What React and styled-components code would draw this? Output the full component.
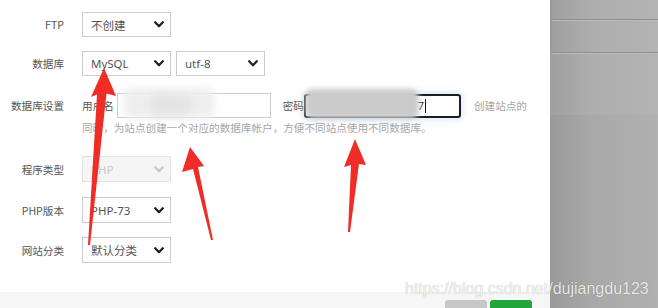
import React from "react";
import styled, { createGlobalStyle } from "styled-components";

const Global = createGlobalStyle`
  html, body { margin: 0; padding: 0; background: #fff; }
  body { font-family: "Noto Sans", "Noto Sans CJK SC", sans-serif; }
  * { box-sizing: border-box; }
`;

const Page = styled.div`
  position: relative;
  width: 658px;
  height: 308px;
  overflow: hidden;
  display: flex;
`;

const Dialog = styled.div`
  width: 550px;
  height: 308px;
  background: #fff;
  display: flex;
  flex-direction: column;
`;

const Form = styled.div`
  flex: 1;
  padding-top: 12px;
  display: flex;
  flex-direction: column;
`;

const Row = styled.div`
  display: flex;
  align-items: center;
  margin-top: ${(p) => p.$mt || 0}px;
  height: ${(p) => p.$h || 25}px;
`;

const Label = styled.div`
  width: 64px;
  margin-right: 18px;
  text-align: right;
  font-family: "Noto Sans CJK SC", sans-serif;
  font-size: 10.6px;
  color: #555;
  white-space: nowrap;
`;

const SelectBox = styled.div`
  width: 89px;
  height: 100%;
  margin-right: ${(p) => p.$mr || 0}px;
  border: 1px solid ${(p) => (p.$disabled ? "#e4e4e4" : "#ccc")};
  background: ${(p) => (p.$disabled ? "#f5f5f5" : "#fff")};
  display: flex;
  align-items: center;
  justify-content: space-between;
  padding: 0 6px 0 8px;
  font-family: "Noto Sans", "Noto Sans CJK SC", sans-serif;
  font-size: 11.5px;
  color: ${(p) => (p.$disabled ? "#c8c8c8" : "#555")};
`;

const Chevron = ({ light }) => (
  <svg width="10" height="7" viewBox="0 0 10 7">
    <path
      d="M1.2 1.3 L5 5.2 L8.8 1.3"
      fill="none"
      stroke={light ? "#c9c9c9" : "#222"}
      strokeWidth="2.3"
      strokeLinecap="round"
      strokeLinejoin="round"
    />
  </svg>
);

const Select = ({ value, disabled, mr }) => (
  <SelectBox $disabled={disabled} $mr={mr}>
    <span>{value}</span>
    <Chevron light={disabled} />
  </SelectBox>
);

const Inline = styled.span`
  font-family: "Noto Sans CJK SC", sans-serif;
  font-size: 10.6px;
  color: ${(p) => p.$color || "#555"};
  margin: 0 ${(p) => p.$mr || 0}px 0 ${(p) => p.$ml || 0}px;
  white-space: nowrap;
`;

const Input = styled.div`
  position: relative;
  width: ${(p) => p.$w}px;
  height: ${(p) => p.$h || 25}px;
  border: ${(p) => (p.$focus ? "2px solid #1e1e1e" : "1px solid #ccc")};
  border-radius: ${(p) => (p.$focus ? 3 : 0)}px;
  box-shadow: ${(p) => (p.$focus ? "0 0 6px 2px rgba(120,170,230,0.25)" : "none")};
  display: flex;
  align-items: center;
  justify-content: flex-end;
  padding-right: 33px;
  font-family: "Noto Sans", sans-serif;
  font-size: 11.5px;
  color: #333;
`;

const Caret = styled.span`
  display: inline-block;
  width: 1px;
  height: 14px;
  background: #111;
  margin-left: 1px;
`;

const Hint = styled.div`
  margin: 3px 0 0 82px;
  font-family: "Noto Sans CJK SC", sans-serif;
  font-size: 10.6px;
  line-height: 14px;
  color: #a6a6a6;
`;

const Blur = styled.div`
  position: absolute;
  left: ${(p) => p.$x}px;
  top: ${(p) => p.$y}px;
  width: ${(p) => p.$w}px;
  height: ${(p) => p.$h}px;
  background: ${(p) => p.$bg};
  border-radius: ${(p) => p.$r || 6}px;
  filter: blur(${(p) => p.$b || 3}px);
`;

const Footer = styled.div`
  height: 16px;
  background: #f6f6f6;
  display: flex;
  justify-content: flex-end;
  align-items: flex-start;
  gap: 3px;
  padding: 8px 18px 0 0;
`;

const Button = styled.div`
  width: 42px;
  height: 30px;
  flex-shrink: 0;
  border-radius: 3px;
  background: ${(p) => (p.$primary ? "#20a53a" : "#c7c7c7")};
`;

const Backdrop = styled.div`
  flex: 1;
  display: flex;
  flex-direction: column;
  background: linear-gradient(to right, #9a9a9a, #a9a9a9 40%, #b0b0b0);
`;

const Band = styled.div`
  height: ${(p) => p.$h}px;
  flex-shrink: 0;
  margin-left: ${(p) => p.$ml || 0}px;
  border-bottom: ${(p) => (p.$line ? "1px solid #8e8e8e" : "none")};
  box-shadow: ${(p) => (p.$line ? "0 1px 0 #b8b8b8" : "none")};
  background: ${(p) => (p.$light ? "rgba(255,255,255,0.06)" : "transparent")};
`;

const Watermark = styled.div`
  position: absolute;
  left: 405px;
  top: 279px;
  font-family: "Liberation Sans", Arial, sans-serif;
  font-size: 16px;
  line-height: 19px;
  color: rgba(255, 255, 255, 0.85);
  text-shadow: 0 0 1px rgba(0, 0, 0, 0.35);
  white-space: nowrap;
`;

const Overlay = styled.svg`
  position: absolute;
  left: 0;
  top: 0;
  pointer-events: none;
`;

export default function App() {
  return (
    <>
      <Global />
      <Page>
        <Dialog>
          <Form>
            <Row>
              <Label>FTP</Label>
              <Select value="不创建" />
            </Row>
            <Row $mt={14}>
              <Label>数据库</Label>
              <Select value="MySQL" mr={5} />
              <Select value="utf-8" />
            </Row>
            <Row $mt={17}>
              <Label>数据库设置</Label>
              <Inline $mr={3}>用户名</Inline>
              <Input $w={154} />
              <Inline $ml={12} $mr={0}>密码</Inline>
              <Input $w={157} $h={24} $focus>
                7<Caret />
              </Input>
              <Inline $ml={13} $color="#a6a6a6">创建站点的</Inline>
            </Row>
            <Hint>同时，为站点创建一个对应的数据库帐户，方便不同站点使用不同数据库。</Hint>
            <Row $mt={21} $h={26}>
              <Label>程序类型</Label>
              <Select value="PHP" disabled />
            </Row>
            <Row $mt={15} $h={26}>
              <Label>PHP版本</Label>
              <Select value="PHP-73" />
            </Row>
            <Row $mt={14} $h={26}>
              <Label>网站分类</Label>
              <Select value="默认分类" />
            </Row>
          </Form>
          <Footer>
            <Button />
            <Button $primary />
          </Footer>
        </Dialog>
        <Backdrop>
          <Band $h={20} $line $ml={2} $light />
          <Band $h={33} $line $ml={2} $light />
          <Band $h={62} $light />
        </Backdrop>

        <Blur $x={124} $y={88} $w={90} $h={30} $bg="#eeeeee" $b={4} />
        <Blur $x={150} $y={95} $w={40} $h={20} $bg="#e4e4e4" $b={4} />
        <Blur $x={305} $y={89} $w={114} $h={30} $bg="#cbcbcb" $b={2.5} $r={8} />

        <Overlay width="658" height="308" viewBox="0 0 658 308">
          <g fill="#ef2c26">
            <polygon points="104,68 116,96 106.5,93.5 90,245 88,245 97,94.5 91,97" />
            <polygon points="190,147 204,166 198,167 213,240 211,240 193,169 182,172" />
            <polygon points="355,139 366,165 359,164 350,232 348,232 351,165 344,167" />
          </g>
        </Overlay>
        <Watermark>https://blog.csdn.net/dujiangdu123</Watermark>
      </Page>
    </>
  );
}
